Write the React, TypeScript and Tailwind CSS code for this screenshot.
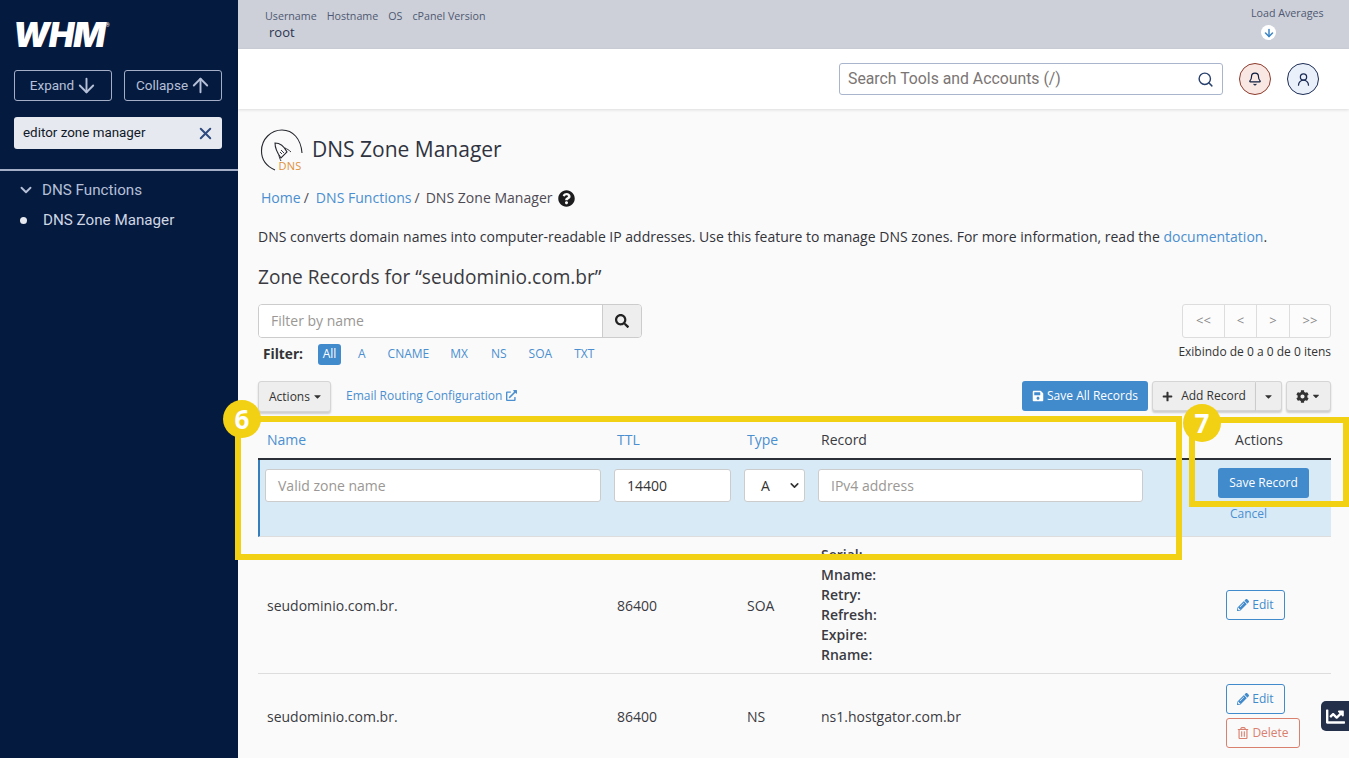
import React from "react";
import { ArrowDown, ArrowUp, X, ChevronDown, Search, Bell, UserRound } from "lucide-react";
import { FaSave, FaSearch, FaPlus, FaCog, FaCaretDown, FaPencilAlt, FaRegTrashAlt, FaExternalLinkAlt, FaQuestionCircle, FaChartLine } from "react-icons/fa";

const link = "text-[#4a8fd0]";
const grid = "grid grid-cols-[350px_130px_74px_375px_144px]";

function Sidebar() {
  return (
    <aside className="w-[238px] shrink-0 bg-[#051a3f] font-['Roboto',sans-serif] flex flex-col">
      <div className="h-[70px] pl-[13px] pt-[17px]">
        <div className="flex items-start text-white leading-none">
          <span className="font-['Inter',sans-serif] font-black italic text-[34px] tracking-[-1px] leading-[36px]">WHM</span>
          <span className="text-[5px] ml-[1px] mt-[6px]">®</span>
        </div>
      </div>
      <div className="flex justify-between pl-[14px] pr-[16px]">
        <button className="w-[98px] h-[31px] border border-[#a4aec6] rounded-[3px] flex items-center justify-center gap-[1px] pl-[2px] text-[#b5c0d8] text-[13.5px]">
          Expand <ArrowDown size={23} />
        </button>
        <button className="w-[98px] h-[31px] border border-[#a4aec6] rounded-[3px] flex items-center justify-center gap-[1px] pl-[2px] text-[#b5c0d8] text-[13.5px]">
          Collapse <ArrowUp size={23} />
        </button>
      </div>
      <div className="ml-[14px] mr-[16px] mt-[16px] h-[32px] bg-[#e6e9ef] rounded-[3px] flex items-center justify-between pl-[9px] pr-[7px] text-[13.4px] text-[#111827]">
        <span className="mt-[1px]">editor zone manager</span>
        <X size={19} strokeWidth={2.5} className="text-[#2f4a80]" />
      </div>
      <div className="mt-[20px] h-[2px] bg-[#a4aec6]" />
      <div className="mt-[4px] h-[30px] flex items-center pl-[17px] gap-[7px] text-[#b5c0d8] text-[15.2px]">
        <ChevronDown size={18} strokeWidth={2.5} /> DNS Functions
      </div>
      <div className="h-[30px] flex items-center pl-[20px] gap-[16px] text-[#cfd6e4] text-[15.2px]">
        <span className="w-[7px] h-[7px] rounded-full bg-[#e6e9ef]" /> DNS Zone Manager
      </div>
    </aside>
  );
}

function TopBars() {
  return (
    <>
      <div className="h-[49px] shrink-0 bg-[#cdd0d9] flex justify-between pl-[27px] pr-[25px] text-[10.7px] text-[#4f5872]">
        <div className="pt-[9px]">
          <div className="flex gap-[10px] leading-[15px]">
            <span>Username</span><span>Hostname</span><span>OS</span><span>cPanel Version</span>
          </div>
          <div className="text-[13px] text-[#2c3550] pl-[4px] leading-[17px]">root</div>
        </div>
        <div className="pt-[6px] flex flex-col items-start w-[73px]">
          <span className="leading-[15px]">Load Averages</span>
          <span className="mt-[4px] ml-[10px] w-[15px] h-[15px] rounded-full bg-white flex items-center justify-center text-[#3d85c6]">
            <ArrowDown size={12} strokeWidth={3} />
          </span>
        </div>
      </div>
      <div className="h-[60px] shrink-0 bg-white shadow-[0_1px_3px_rgba(0,0,0,0.12)] flex items-center justify-end pr-[30px] relative">
        <div className="w-[384px] h-[32px] border border-[#a9b5cc] rounded-[3px] flex items-center justify-between pl-[8px] pr-[8px] font-['Roboto',sans-serif] text-[15.8px] text-[#7b7573]">
          Search Tools and Accounts (/)
          <Search size={17} strokeWidth={2} className="text-[#27406e]" />
        </div>
        <span className="ml-[16px] w-[32px] h-[32px] rounded-full border border-[#8d3a2b] bg-[#f8e7e3] flex items-center justify-center text-[#0c1c3f]">
          <Bell size={14} />
        </span>
        <span className="ml-[16px] w-[32px] h-[32px] rounded-full border border-[#1c2c55] bg-[#e9f0fa] flex items-center justify-center text-[#1c2c55]">
          <UserRound size={15} />
        </span>
      </div>
    </>
  );
}

function Heading() {
  return (
    <>
      <div className="flex items-center h-[46px] mt-[17px] pl-[2px]">
        <svg width="46" height="46" viewBox="0 0 46 46" fill="none" className="shrink-0">
          <path d="M15 44 C6 40 1.500 33 1.500 25 C1.500 13 11 4 22 4 C33 4 41 13 42 27" stroke="#26282e" strokeWidth="1.1" />
          <path d="M15 17 C20 17 24 20 27 26 L21 32 C18 28 15 23 15 17 Z" stroke="#26282e" strokeWidth="1.1" fill="#fafafa" />
          <path d="M25 22 C27 23 29 24 31 26 M19 29 C19 31 20 33 21 35 M21 24 L24 27 M20 26 L22 28" stroke="#26282e" strokeWidth="0.9" />
          <text x="18.500" y="44" fontSize="11" fill="#e0913a" fontFamily="Open Sans, sans-serif" letterSpacing="0.2">DNS</text>
        </svg>
        <h1 className="ml-[6px] text-[21px] text-[#2f3340] leading-none">DNS Zone Manager</h1>
      </div>
      <div className="mt-[14px] pl-[3px] h-[24px] flex items-center text-[14.05px] text-[#4f4b55]">
        <span className={link}>Home</span>
        <span className="ml-[3px]">/</span>
        <span className={`${link} ml-[7px]`}>DNS Functions</span>
        <span className="ml-[3px]">/</span>
        <span className="ml-[6px]">DNS Zone Manager</span>
        <FaQuestionCircle size={17} className="ml-[5px] text-[#1c1c1e]" />
      </div>
      <p className="mt-[17px] text-[14px] leading-[20px] text-[#33333a] whitespace-nowrap">
        DNS converts domain names into computer-readable IP addresses. Use this feature to manage DNS zones. For more information, read the <span className={link}>documentation</span>.
      </p>
      <h2 className="mt-[19px] text-[19.1px] leading-[22px] text-[#3a3a42] whitespace-nowrap">Zone Records for “seudominio.com.br”</h2>
    </>
  );
}

function Filters() {
  return (
    <div className="flex justify-between mt-[16px] h-[70px]">
      <div>
        <div className="flex w-[384px] h-[34px] border border-[#ccc] rounded-[4px] overflow-hidden">
          <div className="flex-1 bg-white pl-[12px] pb-[2px] flex items-center text-[14px] text-[#9a9794]">Filter by name</div>
          <div className="w-[39px] bg-[#eeeeee] border-l border-[#ccc] flex items-center justify-center text-[#222]">
            <FaSearch size={14} />
          </div>
        </div>
        <div className="flex items-center mt-[5px] h-[22px] text-[12px] pl-[5px]">
          <span className="font-bold text-[13.7px] text-[#333] w-[55px]">Filter:</span>
          <span className="bg-[#418acb] text-white rounded-[3px] w-[23px] h-[21px] flex items-center justify-center">All</span>
          <span className={`${link} ml-[17px]`}>A</span>
          <span className={`${link} ml-[22px]`}>CNAME</span>
          <span className={`${link} ml-[21px]`}>MX</span>
          <span className={`${link} ml-[23px]`}>NS</span>
          <span className={`${link} ml-[22px]`}>SOA</span>
          <span className={`${link} ml-[22px]`}>TXT</span>
        </div>
      </div>
      <div className="flex flex-col items-end">
        <div className="flex h-[34px] w-[149px] border border-[#ddd] bg-[#fcfcfc] rounded-[3px] text-[13px] text-[#8a8a8a]">
          <span className="w-[42px] flex items-center justify-center border-r border-[#ddd]">&lt;&lt;</span>
          <span className="w-[32px] flex items-center justify-center border-r border-[#ddd]">&lt;</span>
          <span className="w-[33px] flex items-center justify-center border-r border-[#ddd]">&gt;</span>
          <span className="flex-1 flex items-center justify-center">&gt;&gt;</span>
        </div>
        <span className="mt-[5px] text-[12px] leading-[17px] text-[#333]">Exibindo de 0 a 0 de 0 itens</span>
      </div>
    </div>
  );
}

const grayBtn = "bg-[#eeeeee] border border-[#d5d5d5] shadow-[0_2px_2px_rgba(0,0,0,0.18)] text-[#333] text-[12px] flex items-center";

function Toolbar() {
  return (
    <div className="flex justify-between mt-[7px] h-[31px]">
      <div className="flex items-center">
        <button className={`${grayBtn} h-[31px] w-[73px] rounded-[3px] pl-[10px] gap-[2px] text-[12.3px]`}>
          Actions <FaCaretDown size={11} />
        </button>
        <span className={`${link} ml-[15px] text-[12px] flex items-center gap-[4px] mt-[-2px]`}>
          Email Routing Configuration <FaExternalLinkAlt size={11} />
        </span>
      </div>
      <div className="flex">
        <button className="h-[30px] w-[126px] rounded-[3px] bg-[#418acb] text-white text-[12px] flex items-center justify-center gap-[3px]">
          <FaSave size={12} /> Save All Records
        </button>
        <div className="ml-[4px] flex">
          <button className={`${grayBtn} h-[30px] w-[104px] rounded-l-[3px] justify-center gap-[8px]`}>
            <FaPlus size={11} /> Add Record
          </button>
          <button className={`${grayBtn} h-[30px] w-[26px] border-l-0 rounded-r-[3px] justify-center`}>
            <FaCaretDown size={11} />
          </button>
        </div>
        <button className={`${grayBtn} ml-[4px] h-[30px] w-[45px] rounded-[3px] justify-center gap-[2px]`}>
          <FaCog size={13} /> <FaCaretDown size={10} />
        </button>
      </div>
    </div>
  );
}

function EditBtn() {
  return (
    <button className="w-[59px] h-[30px] border border-[#418acb] rounded-[3px] flex items-center justify-center gap-[3px] text-[12px] text-[#418acb]">
      <FaPencilAlt size={12} /> Edit
    </button>
  );
}

function Table() {
  return (
    <div className="mt-[7px] w-[1073px] text-[14px] text-[#3a3a42]">
      <div className={`${grid} h-[37px] pt-[2px] items-center border-b-2 border-[#2b2f38] box-content`}>
        <span className={`${link} pl-[9px]`}>Name</span>
        <span className={`${link} pl-[9px]`}>TTL</span>
        <span className={`${link} pl-[9px]`}>Type</span>
        <span className="pl-[9px]">Record</span>
        <span className="text-center">Actions</span>
      </div>
      <div className={`${grid} h-[77px] bg-[#d9eaf7] border-l-[2px] border-b border-l-[#357ebd] border-b-[#dddddd]`}>
        <div className="pl-[5px] pt-[9px]">
          <div className="w-[336px] h-[33px] bg-white border border-[#ccc] rounded-[3px] flex items-center pl-[12px] text-[#9a9794]">Valid zone name</div>
        </div>
        <div className="pl-[4px] pt-[9px]">
          <div className="w-[117px] h-[33px] bg-white border border-[#ccc] rounded-[3px] flex items-center pl-[12px] text-[#333]">14400</div>
        </div>
        <div className="pl-[4px] pt-[9px]">
          <div className="w-[61px] h-[33px] bg-white border border-[#ccc] rounded-[3px] flex items-center justify-between pl-[16px] pr-[3px] text-[#333]">
            A <ChevronDown size={13} strokeWidth={3} />
          </div>
        </div>
        <div className="pl-[4px] pt-[9px]">
          <div className="w-[325px] h-[33px] bg-white border border-[#ccc] rounded-[3px] flex items-center pl-[12px] text-[#9a9794]">IPv4 address</div>
        </div>
        <div className="pt-[8px] pl-[29px]">
          <button className="w-[91px] h-[30px] bg-[#418acb] text-white rounded-[3px] text-[12px]">Save Record</button>
          <div className={`${link} text-[12px] pl-[12px] mt-[7px] leading-[17px]`}>Cancel</div>
        </div>
      </div>
      <div className={`${grid} h-[137px] items-center border-b border-[#dddddd]`}>
        <span className="pl-[9px]">seudominio.com.br.</span>
        <span className="pl-[9px]">86400</span>
        <span className="pl-[9px]">SOA</span>
        <div className="pl-[9px] font-semibold text-[14px] leading-[20px]">
          <div>Serial:</div><div>Mname:</div><div>Retry:</div><div>Refresh:</div><div>Expire:</div><div>Rname:</div>
        </div>
        <div className="pl-[39px]"><EditBtn /></div>
      </div>
      <div className={`${grid} items-center h-[84px]`}>
        <span className="pl-[9px]">seudominio.com.br.</span>
        <span className="pl-[9px]">86400</span>
        <span className="pl-[9px]">NS</span>
        <span className="pl-[9px]">ns1.hostgator.com.br</span>
        <div className="pl-[39px] flex flex-col gap-[4px]">
          <EditBtn />
          <button className="w-[74px] h-[30px] border border-[#d9806f] rounded-[3px] flex items-center justify-center gap-[3px] text-[12px] text-[#d9806f]">
            <FaRegTrashAlt size={12} /> Delete
          </button>
        </div>
      </div>
    </div>
  );
}

function Badge({ n, className }: { n: string; className: string }) {
  return (
    <div className={`absolute w-[38px] h-[38px] rounded-full bg-[#f2d013] text-white font-bold text-[26px] flex items-center justify-center font-['Open_Sans',sans-serif] ${className}`}>
      {n}
    </div>
  );
}

export default function App() {
  return (
    <div className="relative flex w-[1349px] h-[758px] overflow-hidden bg-[#fafafa] font-['Open_Sans',sans-serif]">
      <Sidebar />
      <main className="flex-1 min-w-0 flex flex-col">
        <TopBars />
        <div className="pl-[20px] pr-[18px] relative shrink-0">
          <Heading />
          <Filters />
          <Toolbar />
          <Table />
        </div>
      </main>
      <div className="absolute left-[235px] top-[416px] w-[947px] h-[144px] border-[6px] border-[#f2d013]" />
      <div className="absolute left-[1189px] top-[417px] w-[160px] h-[90px] border-[6px] border-[#f2d013]" />
      <Badge n="6" className="left-[223px] top-[400px]" />
      <Badge n="7" className="left-[1183px] top-[404px]" />
      <div className="absolute left-[1321px] top-[701px] w-[28px] h-[30px] bg-[#24304a] rounded-l-[5px] flex items-center justify-center text-white">
        <FaChartLine size={19} />
      </div>
    </div>
  );
}
